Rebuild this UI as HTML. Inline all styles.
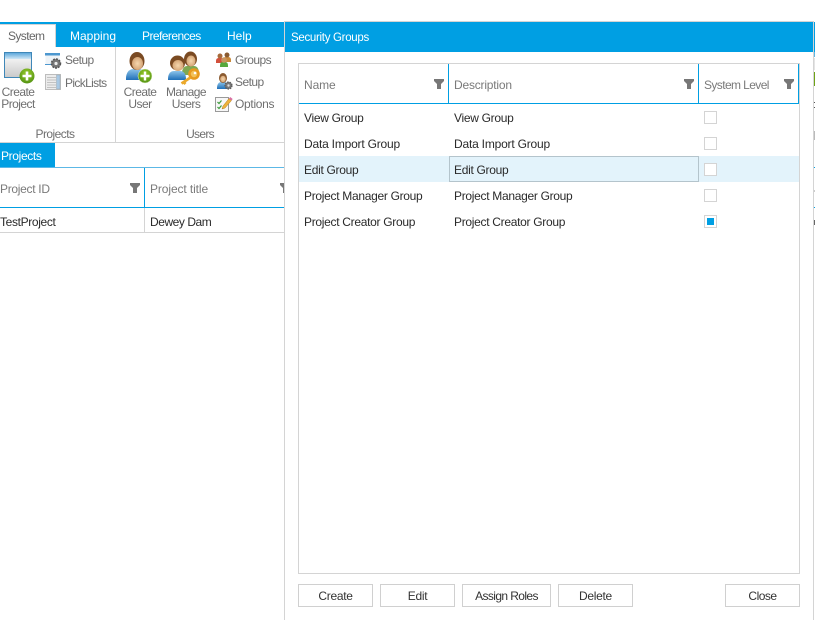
<!DOCTYPE html>
<html><head><meta charset="utf-8"><style>
html,body{margin:0;padding:0;background:#fff;width:815px;height:620px;overflow:hidden}
body{position:relative;font-family:"Liberation Sans",sans-serif;font-size:12px}
.r,.t{position:absolute}
.t{white-space:nowrap;line-height:14px;letter-spacing:-.3px}
.c{text-align:center;transform:translateX(-50%)}
.g{color:#6f6f6f;letter-spacing:-.55px}
.h{color:#7a7a7a}
.d{color:#2a2a2a}
.w{color:#fff}
.btn{position:absolute;top:584px;height:21px;border:1px solid #d0d0d0;background:#fff;color:#333;text-align:center;line-height:22px;letter-spacing:-.3px}
.cb{position:absolute;left:704px;width:11px;height:11px;border:1px solid #d4d4d4;background:#fff}
svg{position:absolute;overflow:visible}
</style></head><body>
<!-- ribbon -->
<div class="r" style="left:0;top:22px;width:284px;height:25px;background:#009fe3"></div>
<div class="r" style="left:0;top:24px;height:23px;background:#fff;border-top:1px solid #d4d4d4;border-right:1px solid #d4d4d4;box-sizing:border-box;width:56px"></div>
<div class="t g" style="left:8px;top:29px;color:#666;letter-spacing:-.6px">System</div>
<div class="t w" style="left:70px;top:29px;letter-spacing:0">Mapping</div>
<div class="t w" style="left:142px;top:29px;letter-spacing:-.55px">Preferences</div>
<div class="t w" style="left:227px;top:29px;letter-spacing:0">Help</div>
<div class="r" style="left:115px;top:47px;width:1px;height:95px;background:#d4d4d4"></div>
<div class="r" style="left:0;top:142px;width:284px;height:1px;background:#d4d4d4"></div>
<div class="r" style="left:284px;top:21px;width:1px;height:599px;background:#d4d4d4"></div>

<!-- create project icon -->
<svg style="left:0;top:48px" width="36" height="36">
<defs><linearGradient id="a" x1="0" y1="0" x2="0" y2="1"><stop offset="0" stop-color="#fff"/><stop offset="1" stop-color="#c9c9c9"/></linearGradient>
<linearGradient id="b" x1="0" y1="0" x2="0" y2="1"><stop offset="0" stop-color="#5fa9dc"/><stop offset="1" stop-color="#cfe6f5"/></linearGradient>
<radialGradient id="gr" cx=".5" cy=".35" r=".7"><stop offset="0" stop-color="#9ccc2e"/><stop offset="1" stop-color="#4e8f10"/></radialGradient>
<linearGradient id="sh" x1="0" y1="0" x2="0" y2="1"><stop offset="0" stop-color="#8cc4ea"/><stop offset="1" stop-color="#1f6fb8"/></linearGradient>
<radialGradient id="sk" cx=".5" cy=".5" r=".6"><stop offset="0" stop-color="#f6d7ae"/><stop offset="1" stop-color="#cf9c6b"/></radialGradient></defs>
<rect x="4.500" y="4.500" width="27" height="25" fill="url(#a)" stroke="#3f87b8"/>
<rect x="5" y="5" width="26" height="6" fill="url(#b)"/>
<circle cx="27" cy="28" r="7.500" fill="url(#gr)"/>
<path d="M27 23.500v9M22.500 28h9" stroke="#fff" stroke-width="2.600"/>
</svg>
<div class="t g c" style="left:18px;top:85px">Create</div>
<div class="t g c" style="left:18px;top:97px">Project</div>

<!-- setup small icon -->
<svg style="left:45px;top:52px" width="18" height="18">
<rect x=".5" y="2" width="14" height="10" fill="#eef3f7"/><rect x="0" y="1" width="15" height="2.500" fill="#4c97cf"/><rect x="0" y="12" width="10" height="1" fill="#4c97cf"/>
<circle cx="11" cy="11.500" r="4.500" fill="#777" stroke="#555" stroke-width="1.500" stroke-dasharray="2 1"/><circle cx="11" cy="11.500" r="1.600" fill="#eee"/>
</svg>
<div class="t g" style="left:65px;top:53px">Setup</div>
<!-- picklists icon -->
<svg style="left:45px;top:74px" width="18" height="16">
<rect x=".5" y=".5" width="15" height="15" fill="#ececec" stroke="#bdbdbd"/>
<path d="M2 3.500h9M2 6h9M2 8.500h9M2 11h9M2 13.500h9" stroke="#c2c2c2"/>
<rect x="11.500" y="1" width="3.500" height="14" fill="#a9c9e4" stroke="#9aa7b2" stroke-width=".5"/>
</svg>
<div class="t g" style="left:65px;top:76px;letter-spacing:-.65px">PickLists</div>
<div class="t g c" style="left:55px;top:127px">Projects</div>

<!-- create user -->
<svg style="left:124px;top:51px" width="30" height="32">
<path d="M2 27c0-6 4-9 7-9h6c4 0 7 3 7 9v2H2z" fill="url(#sh)"/>
<ellipse cx="13" cy="10" rx="7.500" ry="9" fill="#7a4a22"/>
<ellipse cx="13.500" cy="12.500" rx="5.500" ry="6.500" fill="url(#sk)"/>
<circle cx="21" cy="25" r="7" fill="url(#gr)" stroke="#eaf3d8" stroke-width=".5"/>
<path d="M21 20.500v9M16.500 25h9" stroke="#fff" stroke-width="2.400"/>
</svg>
<div class="t g c" style="left:140px;top:85px">Create</div>
<div class="t g c" style="left:140px;top:97px">User</div>

<!-- manage users -->
<svg style="left:167px;top:51px" width="36" height="32">
<path d="M15 22c0-5 3-7 5-7h7c3 0 5 3 5 7v2H15z" fill="#7fa852"/>
<ellipse cx="23.500" cy="8" rx="6.500" ry="7.500" fill="#7a4a22"/>
<ellipse cx="24" cy="10" rx="4.500" ry="5.500" fill="url(#sk)"/>
<path d="M1 28c0-6 3-8 6-8h6c4 0 6 3 6 8v1H1z" fill="url(#sh)"/>
<ellipse cx="10.500" cy="12" rx="7.500" ry="7.500" fill="#7a4a22"/>
<ellipse cx="11" cy="14.500" rx="5.500" ry="5.500" fill="url(#sk)"/>
<circle cx="27" cy="23" r="4.500" fill="#f3c25a" stroke="#e89a1f" stroke-width="2.600"/>
<circle cx="28" cy="22" r="1.300" fill="#fff"/>
<path d="M23.500 26.500l-9 6M16.500 31l2 2" stroke="#eba92b" stroke-width="2.800" fill="none"/>
</svg>
<div class="t g c" style="left:186px;top:85px">Manage</div>
<div class="t g c" style="left:186px;top:97px">Users</div>

<!-- groups -->
<svg style="left:216px;top:52px" width="16" height="16">
<path d="M0 9c0-2 1-3 3-3h2c2 0 3 1 3 3v2H0z" fill="#d2503c"/><circle cx="4" cy="4" r="2.500" fill="#a8693a"/>
<path d="M7 8c0-2 1-3 3-3h2c2 0 3 1 3 3v2H7z" fill="#c9893a"/><circle cx="11" cy="3" r="2.500" fill="#8a5a30"/>
<path d="M4 14c0-3 1-4 3-4h2c2 0 3 1 3 4v1H4z" fill="#57a83c"/><circle cx="8" cy="8" r="2.800" fill="#c9945f"/>
</svg>
<div class="t g" style="left:235px;top:53px">Groups</div>
<!-- setup user -->
<svg style="left:216px;top:73px" width="18" height="18">
<path d="M1 15c0-4 2-6 4-6h3c3 0 5 2 5 6v1H1z" fill="url(#sh)"/>
<ellipse cx="7" cy="5" rx="4" ry="5" fill="#8a5a30"/><ellipse cx="7" cy="6" rx="2.800" ry="3.200" fill="url(#sk)"/>
<circle cx="12.500" cy="12.500" r="3.500" fill="#777" stroke="#5a5a5a" stroke-width="1.200" stroke-dasharray="1.500 1"/><circle cx="12.500" cy="12.500" r="1.200" fill="#ddd"/>
</svg>
<div class="t g" style="left:235px;top:75px">Setup</div>
<!-- options -->
<svg style="left:215px;top:95px" width="18" height="18">
<rect x=".5" y="2.500" width="13" height="14" fill="#f7f7f7" stroke="#9a9a9a"/>
<path d="M2.500 7l1.500 1.500L6.500 5.500M2.500 12l1.500 1.500 2.500-3" stroke="#3b9b3b" stroke-width="1.200" fill="none"/>
<path d="M7 14l1-3L14 3.500l2.500 2L10 13z" fill="#eeb23b" stroke="#b07f1e" stroke-width=".5"/>
<path d="M14 3.500l1.200-1.500 2.500 2-1.200 1.500z" fill="#d96fa6"/>
</svg>
<div class="t g" style="left:235px;top:97px;letter-spacing:-.3px">Options</div>
<div class="t g c" style="left:200px;top:127px;letter-spacing:-.7px">Users</div>

<!-- projects panel -->
<div class="r" style="left:0;top:143px;width:55px;height:24px;background:#009fe3"></div>
<div class="t w" style="left:1px;top:149px;letter-spacing:-.35px">Projects</div>
<div class="r" style="left:0;top:167px;width:284px;height:1px;background:#5cb8e6"></div>
<div class="r" style="left:144px;top:168px;width:1px;height:39px;background:#009fe3"></div>
<div class="r" style="left:0;top:207px;width:284px;height:1px;background:#009fe3"></div>
<div class="t h" style="left:0;top:182px">Project ID</div>
<div class="t h" style="left:150px;top:182px;letter-spacing:-.1px">Project title</div>
<svg style="left:130px;top:183px" width="10" height="10"><path d="M0 0h10v2L7 5v5H3V5L0 2z" fill="#777"/></svg>
<svg style="left:280px;top:183px" width="4" height="10"><path d="M0 0h4v10H3V5L0 2z" fill="#777"/></svg>
<div class="t d" style="left:0;top:215px;letter-spacing:-.35px">TestProject</div>
<div class="t d" style="left:150px;top:215px;letter-spacing:-.45px">Dewey Dam</div>
<div class="r" style="left:144px;top:208px;width:1px;height:24px;background:#d4d4d4"></div>
<div class="r" style="left:0;top:232px;width:284px;height:1px;background:#d4d4d4"></div>

<!-- dialog -->
<div class="r" style="left:285px;top:21px;width:529px;height:1px;background:#d4d4d4"></div>
<div class="r" style="left:285px;top:22px;width:528px;height:30px;background:#009fe3"></div>
<div class="t w" style="left:291px;top:31px;font-size:11.500px">Security Groups</div>
<div class="r" style="left:813px;top:21px;width:1px;height:599px;background:#d4d4d4"></div>
<div class="r" style="left:814px;top:22px;width:1px;height:30px;background:#009fe3"></div>
<div class="r" style="left:814px;top:52px;width:1px;height:5px;background:#5cb8e6"></div>
<div class="r" style="left:814px;top:58px;width:1px;height:12px;background:#e4e4e4"></div>
<div class="r" style="left:814px;top:72px;width:1px;height:14px;background:#6fa317"></div>
<div class="r" style="left:814px;top:102px;width:1px;height:1px;background:#555"></div>
<div class="r" style="left:814px;top:107px;width:1px;height:1px;background:#555"></div>
<div class="r" style="left:814px;top:131px;width:1px;height:9px;background:#bbb"></div>
<div class="r" style="left:814px;top:167px;width:1px;height:1px;background:#009fe3"></div>
<div class="r" style="left:814px;top:190px;width:1px;height:2px;background:#ccc"></div>
<div class="r" style="left:814px;top:207px;width:1px;height:1px;background:#009fe3"></div>
<div class="r" style="left:814px;top:220px;width:1px;height:5px;background:#666"></div>

<!-- grid -->
<div class="r" style="left:298px;top:63px;width:500px;height:509px;border:1px solid #d4d4d4"></div>
<div class="r" style="left:299px;top:103px;width:500px;height:1px;background:#009fe3"></div>
<div class="r" style="left:448px;top:64px;width:1px;height:39px;background:#009fe3"></div>
<div class="r" style="left:698px;top:64px;width:1px;height:39px;background:#009fe3"></div>
<div class="r" style="left:798px;top:64px;width:1px;height:39px;background:#009fe3"></div>
<div class="t h" style="left:304px;top:78px;letter-spacing:-.1px">Name</div>
<div class="t h" style="left:454px;top:78px;letter-spacing:-.2px">Description</div>
<div class="t h" style="left:704px;top:78px;letter-spacing:-.6px">System Level</div>
<svg style="left:434px;top:79px" width="10" height="10"><path d="M0 0h10v2L7 5v5H3V5L0 2z" fill="#777"/></svg>
<svg style="left:684px;top:79px" width="10" height="10"><path d="M0 0h10v2L7 5v5H3V5L0 2z" fill="#777"/></svg>
<svg style="left:784px;top:79px" width="10" height="10"><path d="M0 0h10v2L7 5v5H3V5L0 2z" fill="#777"/></svg>

<div class="r" style="left:299px;top:156px;width:500px;height:26px;background:#e3f3fb"></div>
<div class="r" style="left:449px;top:156px;width:248px;height:24px;border:1px solid #b4c4cc"></div>

<div class="t d" style="left:304px;top:111px">View Group</div><div class="t d" style="left:454px;top:111px">View Group</div>
<div class="t d" style="left:304px;top:137px;letter-spacing:-.2px">Data Import Group</div><div class="t d" style="left:454px;top:137px;letter-spacing:-.2px">Data Import Group</div>
<div class="t d" style="left:304px;top:163px">Edit Group</div><div class="t d" style="left:454px;top:163px">Edit Group</div>
<div class="t d" style="left:304px;top:189px">Project Manager Group</div><div class="t d" style="left:454px;top:189px">Project Manager Group</div>
<div class="t d" style="left:304px;top:215px">Project Creator Group</div><div class="t d" style="left:454px;top:215px">Project Creator Group</div>

<div class="cb" style="top:111px"></div>
<div class="cb" style="top:137px"></div>
<div class="cb" style="top:163px"></div>
<div class="cb" style="top:189px"></div>
<div class="cb" style="top:215px"></div>
<div class="r" style="left:707px;top:218px;width:7px;height:7px;background:#009fe3"></div>

<div class="btn" style="left:298px;width:73px">Create</div>
<div class="btn" style="left:380px;width:73px">Edit</div>
<div class="btn" style="left:462px;width:87px;letter-spacing:-.6px">Assign Roles</div>
<div class="btn" style="left:558px;width:73px">Delete</div>
<div class="btn" style="left:725px;width:73px;letter-spacing:-.5px">Close</div>
</body></html>
